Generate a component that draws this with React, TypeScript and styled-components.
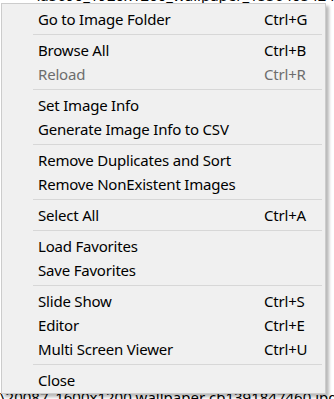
import styled, { createGlobalStyle } from 'styled-components'

const GlobalStyle = createGlobalStyle`
  html, body {
    margin: 0;
    padding: 0;
    background: #ffffff;
  }
  #root {
    width: 334px;
    height: 399px;
  }
`

const Screen = styled.div`
  position: relative;
  width: 334px;
  height: 399px;
  overflow: hidden;
  background: #ffffff;
  font-family: 'Noto Sans', 'Open Sans', sans-serif;
`

const FileList = styled.div`
  display: flex;
  flex-direction: column;
  margin-top: -13px;
`

const FileLine = styled.div<{ $indent?: number }>`
  height: 17px;
  line-height: 17px;
  font-size: 15px;
  color: #000;
  white-space: nowrap;
  padding-left: ${(p) => p.$indent ?? 0}px;
`

const Spacer = styled.div`
  height: 385px;
`

const Menu = styled.div`
  position: absolute;
  left: 1px;
  top: 3px;
  width: 325px;
  box-sizing: border-box;
  border: 1px solid #cccccc;
  background: #f0f0f0;
  padding: 3px 0 1px;
  display: flex;
  flex-direction: column;
  box-shadow: 3px 3px 3px rgba(0, 0, 0, 0.28);
`

const Item = styled.div<{ $disabled?: boolean }>`
  display: grid;
  grid-template-columns: 226px 1fr;
  align-items: center;
  height: 24px;
  padding-left: 36px;
  font-size: 15px;
  letter-spacing: -0.2px;
  color: ${(p) => (p.$disabled ? '#6d6d6d' : '#000000')};
  white-space: nowrap;
`

const Shortcut = styled.span`
  font-size: 15px;
`

const Separator = styled.div`
  height: 7px;
  display: flex;
  align-items: center;
  padding: 0 3px 0 31px;

  &::after {
    content: '';
    flex: 1;
    height: 1px;
    background: #d7d7d7;
  }
`

type Entry =
  | { label: string; key?: string; disabled?: boolean }
  | 'sep'

const entries: Entry[] = [
  { label: 'Go to Image Folder', key: 'Ctrl+G' },
  'sep',
  { label: 'Browse All', key: 'Ctrl+B' },
  { label: 'Reload', key: 'Ctrl+R', disabled: true },
  'sep',
  { label: 'Set Image Info' },
  { label: 'Generate Image Info to CSV' },
  'sep',
  { label: 'Remove Duplicates and Sort' },
  { label: 'Remove NonExistent Images' },
  'sep',
  { label: 'Select All', key: 'Ctrl+A' },
  'sep',
  { label: 'Load Favorites' },
  { label: 'Save Favorites' },
  'sep',
  { label: 'Slide Show', key: 'Ctrl+S' },
  { label: 'Editor', key: 'Ctrl+E' },
  { label: 'Multi Screen Viewer', key: 'Ctrl+U' },
  'sep',
  { label: 'Close' },
]

const App = () => {
  return (
    <>
      <GlobalStyle />
      <Screen>
        <FileList>
          <FileLine $indent={34}>
            \d5690_1920x1200_wallpaper_1556405424.jpg
          </FileLine>
          <Spacer />
          <FileLine $indent={0}>
            \20087_1600x1200 wallpaper cb1391847460.jpg
          </FileLine>
        </FileList>
        <Menu>
          {entries.map((e, i) =>
            e === 'sep' ? (
              <Separator key={i} />
            ) : (
              <Item key={i} $disabled={e.disabled}>
                <span>{e.label}</span>
                {e.key && <Shortcut>{e.key}</Shortcut>}
              </Item>
            )
          )}
        </Menu>
      </Screen>
    </>
  )
}

export default App
